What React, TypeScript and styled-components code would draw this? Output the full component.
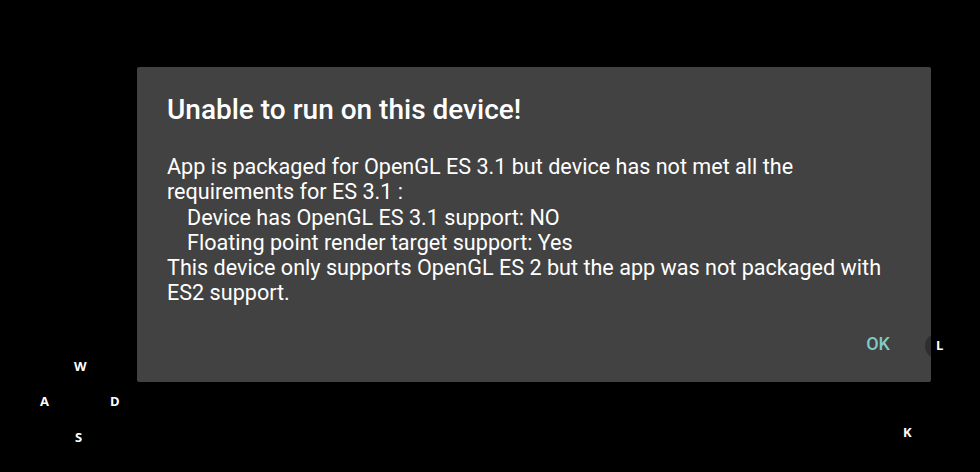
import React from "react";
import styled, { createGlobalStyle } from "styled-components";

const Global = createGlobalStyle`
  html, body { margin: 0; padding: 0; background: #000; }
  body { font-family: Roboto, "Noto Sans", sans-serif; }
`;

const Screen = styled.div`
  position: relative;
  width: 980px;
  height: 472px;
  background: #000;
  overflow: hidden;
  box-sizing: border-box;
  padding: 67px 49px 0 137px;
`;

const Dialog = styled.div`
  position: relative;
  z-index: 1;
  width: 794px;
  height: 315px;
  box-sizing: border-box;
  background: #424242;
  border-radius: 2px;
  padding: 26px 30px 0 30px;
  display: flex;
  flex-direction: column;
  overflow: hidden;
`;

const Title = styled.h1`
  margin: 0;
  font-family: Roboto, sans-serif;
  font-weight: 500;
  font-size: 28px;
  line-height: 33px;
  color: #fff;
`;

const Body = styled.div`
  margin-top: 28px;
  font-family: Roboto, sans-serif;
  font-size: 21.6px;
  line-height: 25.3px;
  color: #fff;
`;

const Line = styled.div<{ $indent?: boolean }>`
  padding-left: ${(p) => (p.$indent ? "20px" : "0")};
`;

const Actions = styled.div`
  margin-top: auto;
  display: flex;
  justify-content: flex-end;
  padding: 0 11px 28px 0;
`;

const Button = styled.button`
  background: none;
  border: none;
  padding: 0;
  font-family: Roboto, sans-serif;
  font-weight: 500;
  font-size: 18px;
  line-height: 21px;
  color: #80cbc4;
  cursor: pointer;
`;

const DPad = styled.div`
  position: absolute;
  left: 40px;
  top: 358px;
  display: grid;
  grid-template-columns: 34px 36px auto;
  grid-template-rows: 35px 36px auto;
  z-index: 3;
`;

const PadKey = styled.span<{ $col: number; $row: number; $nudge?: number }>`
  grid-column: ${(p) => p.$col};
  grid-row: ${(p) => p.$row};
  padding-left: ${(p) => p.$nudge ?? 0}px;
  font-family: "Open Sans", sans-serif;
  font-weight: 700;
  font-size: 13px;
  line-height: 17px;
  color: #fff;
`;

const KeyHalo = styled.div`
  position: absolute;
  left: 925px;
  top: 333px;
  width: 26px;
  height: 26px;
  border-radius: 50%;
  background: rgba(0, 0, 0, 0.3);
  z-index: 2;
`;

const Key = styled.span<{ $x: number; $y: number }>`
  position: absolute;
  left: ${(p) => p.$x}px;
  top: ${(p) => p.$y}px;
  z-index: 3;
  font-family: "Open Sans", sans-serif;
  font-weight: 700;
  font-size: 13px;
  line-height: 1;
  color: #fff;
`;

export default function App() {
  return (
    <>
      <Global />
      <Screen>
        <Dialog>
          <Title>Unable to run on this device!</Title>
          <Body>
            <Line>App is packaged for OpenGL ES 3.1 but device has not met all the</Line>
            <Line>requirements for ES 3.1 :</Line>
            <Line $indent>Device has OpenGL ES 3.1 support: NO</Line>
            <Line $indent>Floating point render target support: Yes</Line>
            <Line>This device only supports OpenGL ES 2 but the app was not packaged with</Line>
            <Line>ES2 support.</Line>
          </Body>
          <Actions>
            <Button>OK</Button>
          </Actions>
        </Dialog>
        <KeyHalo />
        <DPad>
          <PadKey $col={2} $row={1}>W</PadKey>
          <PadKey $col={1} $row={2}>A</PadKey>
          <PadKey $col={3} $row={2}>D</PadKey>
          <PadKey $col={2} $row={3} $nudge={1}>S</PadKey>
        </DPad>
        <Key $x={936} $y={339}>L</Key>
        <Key $x={903} $y={426}>K</Key>
      </Screen>
    </>
  );
}
